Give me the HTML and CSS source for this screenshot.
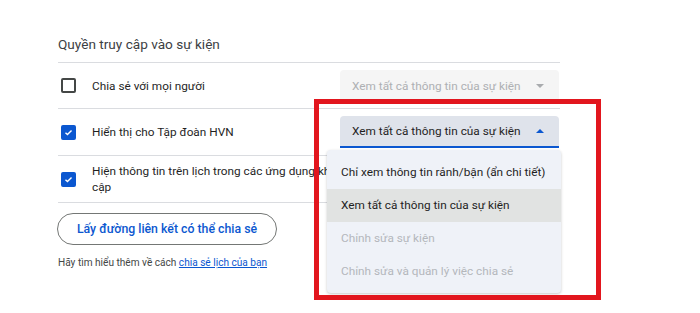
FILE: index.html
```html
<!DOCTYPE html>
<html lang="vi">
<head>
<meta charset="utf-8">
<title>Quyền truy cập vào sự kiện</title>
<link rel="stylesheet" href="styles.css">
</head>
<body>
<div class="panel">
  <h2 class="title">Quyền truy cập vào sự kiện</h2>
  <div class="rows">
    <div class="row">
      <span class="cb"></span>
      <span class="label">Chia sẻ với mọi người</span>
      <div class="select disabled"><span>Xem tất cả thông tin của sự kiện</span><span class="caret down"></span></div>
    </div>
    <div class="row">
      <span class="cb checked"><svg viewBox="0 0 16 16" width="16" height="16"><path d="M3.6 8.2l2.9 2.8 5.9-6" fill="none" stroke="#fff" stroke-width="2"/></svg></span>
      <span class="label">Hiển thị cho Tập đoàn HVN</span>
      <div class="select active"><span>Xem tất cả thông tin của sự kiện</span><span class="caret up"></span></div>
    </div>
    <div class="row">
      <span class="cb checked"><svg viewBox="0 0 16 16" width="16" height="16"><path d="M3.6 8.2l2.9 2.8 5.9-6" fill="none" stroke="#fff" stroke-width="2"/></svg></span>
      <span class="label two">Hiện thông tin trên lịch trong các ứng dụng khác mà người dùng có quyền truy<br>cập</span>
    </div>
  </div>
  <button class="pill">Lấy đường liên kết có thể chia sẻ</button>
  <p class="help">Hãy tìm hiểu thêm về cách <a href="#">chia sẻ lịch của bạn</a></p>

  <ul class="menu">
    <li>Chỉ xem thông tin rảnh/bận (ẩn chi tiết)</li>
    <li class="sel">Xem tất cả thông tin của sự kiện</li>
    <li class="off">Chỉnh sửa sự kiện</li>
    <li class="off">Chỉnh sửa và quản lý việc chia sẻ</li>
  </ul>
  <div class="mark"></div>
</div>
</body>
</html>
```
FILE: styles.css
```css
* { box-sizing: border-box; }
html, body { margin: 0; padding: 0; background: #fff; }
body { font-family: Roboto, "Noto Sans", Arial, sans-serif; color: #1f1f1f; width: 700px; height: 313px; overflow: hidden; }

.panel { position: relative; padding: 34px 0 0 58px; width: 560px; }

.title { margin: 0 0 8px; font-size: 13.6px; font-weight: 400; line-height: 20px; color: #3c4043; }

.rows { border-bottom: 1px solid #dadce0; }
.row { display: flex; align-items: center; height: 47px; border-top: 1px solid #dadce0; }
.row:first-child { height: 46px; }

.cb { flex: none; width: 15px; height: 15px; margin: 0 16px 0 3px; border: 2px solid #444746; border-radius: 2px; display: flex; align-items: center; justify-content: center; }
.cb.checked { background: #0b57d0; border-color: #0b57d0; }
.cb svg { width: 13px; height: 13px; }

.label { flex: 1; font-size: 11.8px; line-height: 16px; color: #1f1f1f; white-space: nowrap; overflow: hidden; }
.label.two { flex: none; width: 236px; }

.select { flex: none; width: 219px; height: 32px; margin-right: 1px; display: flex; align-items: center; justify-content: space-between; padding: 0 15px 0 12px; border-radius: 4px 4px 0 0; font-size: 11.8px; white-space: nowrap; }
.select.disabled { background: #f5f5f5; color: #aeb0b3; }
.select.active { background: #dfe3eb; color: #1f1f1f; border-bottom: 2px solid #0b57d0; }
.caret { width: 0; height: 0; border-left: 4px solid transparent; border-right: 4px solid transparent; }
.caret.down { border-top: 4px solid #a9abae; }
.caret.up { border-bottom: 4px solid #0b57d0; }

.pill { display: block; margin: 10px 0 0 -1px; width: 220px; height: 32px; border: 1px solid #747775; border-radius: 16px; background: #fff; color: #0b57d0; font-family: Roboto, Arial, sans-serif; font-size: 12.3px; font-weight: 500; cursor: pointer; }

.help { margin: 11px 0 0; font-size: 10.1px; line-height: 14px; color: #444746; }
.help a { color: #0b57d0; }

.menu { position: absolute; left: 327px; top: 150px; width: 234px; height: 143px; margin: 0; padding: 6px 0 0; list-style: none; background: #eff2f8; border-radius: 4px; box-shadow: 0 1px 3px rgba(0,0,0,.22); }
.menu li { height: 33px; line-height: 33px; padding-left: 14px; font-size: 11.8px; color: #1f1f1f; white-space: nowrap; }
.menu li.sel { background: #e1e3e2; }
.menu li.off { color: #b4b7bc; }

.mark { position: absolute; left: 314px; top: 99px; width: 287px; height: 201px; border: 5px solid #e2161e; }
```
